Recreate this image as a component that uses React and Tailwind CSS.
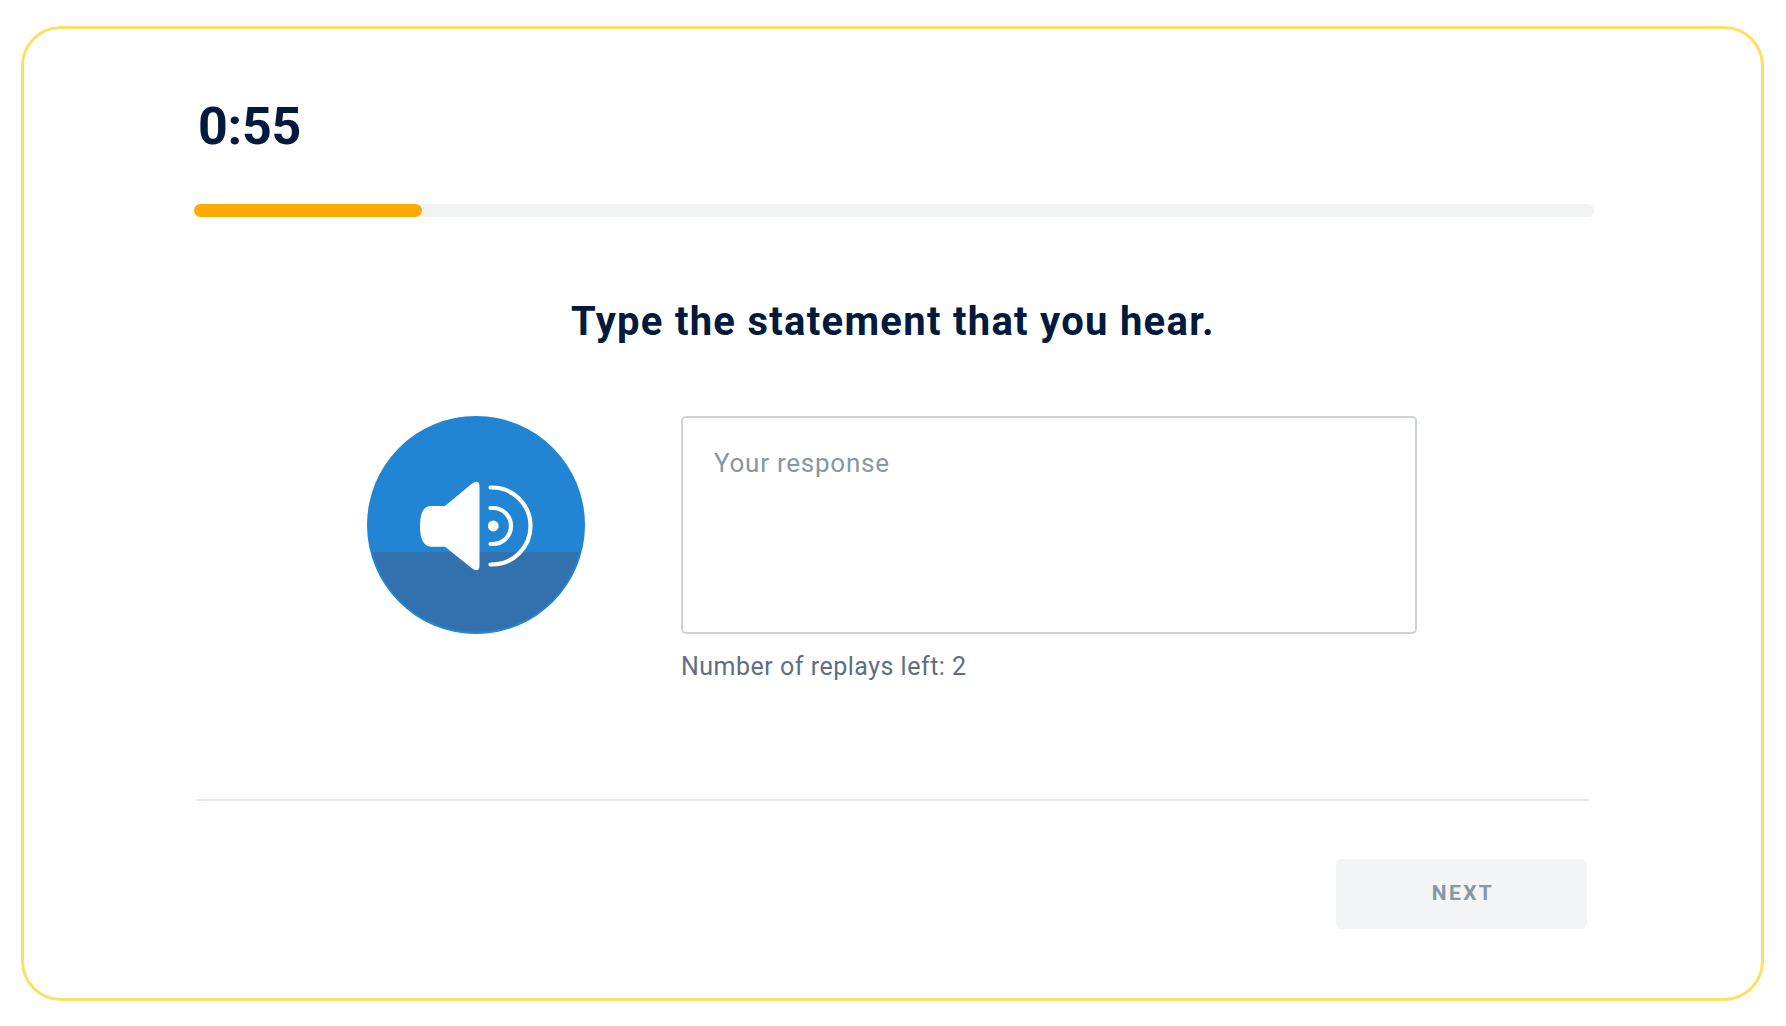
const font = "font-['Roboto',sans-serif]";

function SpeakerButton() {
  return (
    <svg width="218" height="218" viewBox="0 0 218 218" className="shrink-0">
      <circle cx="109" cy="109" r="109" fill="#2285d3" />
      <path d="M5.5 136H212.5A107 107 0 0 1 5.5 136Z" fill="#3271ad" />
      <path
        d="M64 90H78L104.5 68Q112 62.5 112.5 70V150Q112 157.5 104.5 152L78 130.7H64Q53 130 53 110Q53 90 64 90Z"
        fill="#fff"
      />
      <circle cx="126.3" cy="110" r="5.4" fill="#fff" />
      <path
        d="M123.5 92H126A18 18 0 0 1 126 128H123.5M123.5 71.5H125A38.5 38.5 0 0 1 125 148.5H123.5"
        fill="none"
        stroke="#fff"
        strokeWidth="4.2"
        strokeLinecap="round"
      />
    </svg>
  );
}

export default function App() {
  return (
    <div className={`${font} w-[1786px] h-[1026px] bg-white pl-[21px] pt-[26px]`}>
      <div className="w-[1743px] h-[975px] rounded-[40px] border-[3px] border-[#fde063] bg-white pl-[170px] flex flex-col">
        {/* Timer */}
        <div className="pl-[4px] pt-[60px] h-[175px] text-[52px] leading-[75px] font-bold tracking-[-0.3px] text-[#021a3b]">0:55</div>

        {/* Progress */}
        <div className="h-[13px] w-[1400px] rounded-full bg-[#f2f3f5]">
          <div className="h-full w-[228px] rounded-full bg-[#ffab00]"></div>
        </div>

        {/* Question */}
        <h1 className="mt-[81px] h-[48px] w-[1398px] text-center text-[40px] leading-[48px] font-bold tracking-[1.27px] text-[#021a3b]">
          Type the statement that you hear.
        </h1>

        <div className="mt-[70px] h-[218px] flex pl-[173px] gap-[96px]">
          <SpeakerButton />
          <div className="w-[736px]">
            <textarea
              placeholder="Your response"
              className="block w-full h-[218px] resize-none rounded-[5px] border-2 border-[#ced3d7] bg-white px-[31px] py-[27px] text-[26px] leading-[36px] tracking-[0.75px] placeholder:text-[#8a96a3]"
            />
            <p className="mt-[17px] text-[25px] leading-[32px] tracking-[0.5px] text-[#5f6f7f]">Number of replays left: 2</p>
          </div>
        </div>

        {/* Footer */}
        <div className="mt-[165px] ml-[3px] w-[1392px] border-t-2 border-[#e6eaf0]"></div>
        <div className="mt-[58px] ml-[1142px]">
          <button className="w-[251px] h-[70px] rounded-[6px] bg-[#f2f4f6] pl-[3px] text-[21px] font-bold tracking-[2.4px] text-[#8a96a0]">
            NEXT
          </button>
        </div>
      </div>
    </div>
  );
}
